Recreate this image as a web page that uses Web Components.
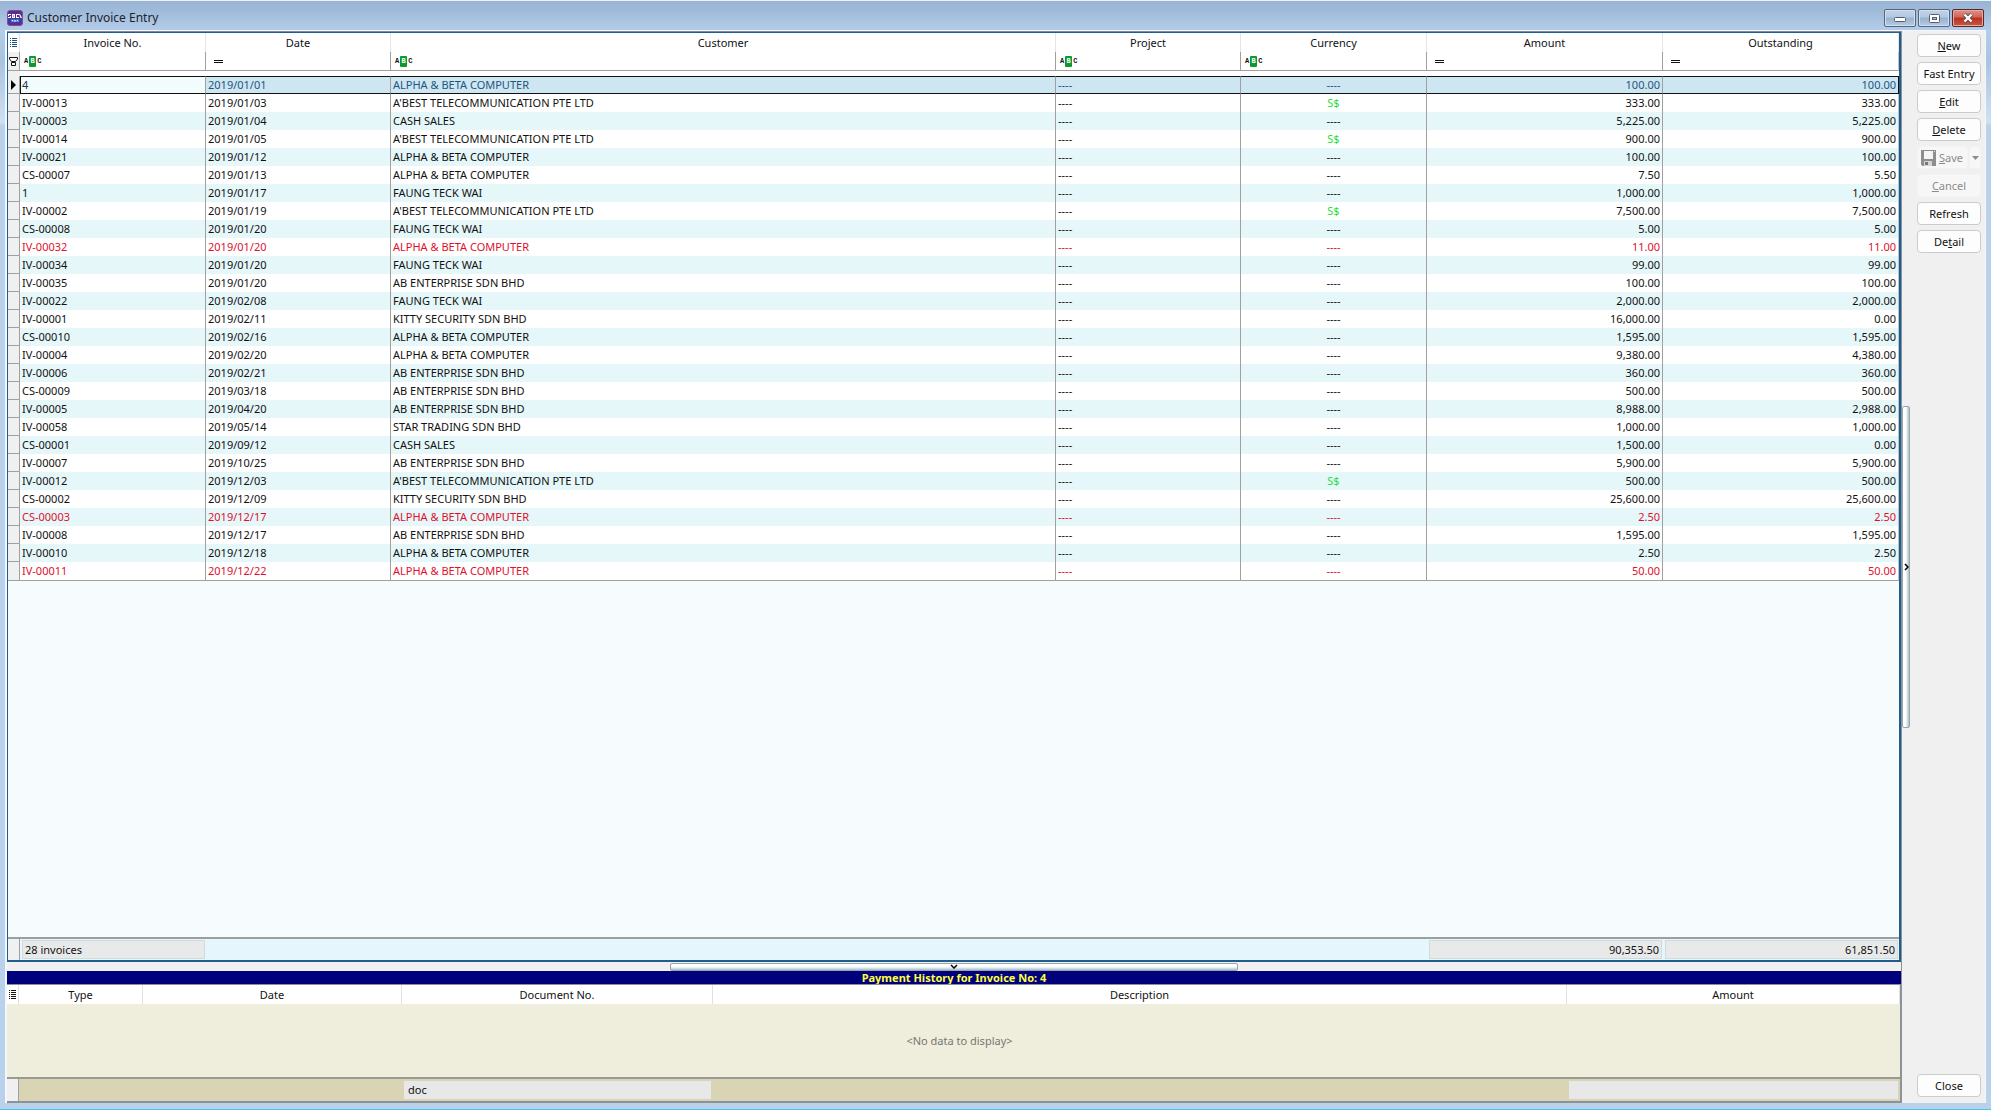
<!DOCTYPE html>
<html lang="en">
<head>
<meta charset="utf-8">
<title>Customer Invoice Entry</title>
<style>
  html, body { margin: 0; height: 100%; }
  body { font: 11px/16px "Noto Sans", "Open Sans", sans-serif; color: #111; background: #b9d1ea; }
</style>
</head>
<body>
<app-window>
  <title-bar slot="title">Customer Invoice Entry</title-bar>
  <invoice-grid slot="main"></invoice-grid>
  <split-handle slot="main" direction="down"></split-handle>
  <payment-history slot="main" invoice="4"></payment-history>
  <split-handle slot="divider" direction="right"></split-handle>
  <side-actions slot="side">
    <action-button><u>N</u>ew</action-button>
    <action-button>Fast Entry</action-button>
    <action-button><u>E</u>dit</action-button>
    <action-button><u>D</u>elete</action-button>
    <save-button></save-button>
    <action-button disabled><u>C</u>ancel</action-button>
    <action-button>Refresh</action-button>
    <action-button>De<u>t</u>ail</action-button>
    <action-button slot="bottom">Close</action-button>
  </side-actions>
</app-window>

<script>
class BaseElement extends HTMLElement {
  connectedCallback() {
    if (this.shadowRoot) return;
    this.attachShadow({ mode: 'open' }).innerHTML = this.render();
  }
}

const define = (name, render) =>
  customElements.define(name, class extends BaseElement {
    render() { return render(this); }
  });

define('app-window', () => `
  <style>
    :host { display: flex; flex-direction: column; height: 100vh; box-sizing: border-box;
      border-top: 1px solid #eef3f8; border-bottom: 1px solid #4fc0e4;
      background: linear-gradient(#9ab4d4, #b4cce8 30px, #a9c3e0 60px, #cfe0f3 121px, #b9d1ea 125px); }
    .client { flex: 1; display: flex; min-height: 0; margin: 0 5px 6px; border: 1px solid #f4f7fb;
      border-left-width: 2px; border-bottom: 0; background: #f0f0f0; }
    main { flex: 1; min-width: 0; display: flex; flex-direction: column; border-right: 1px solid #8d9399;
      border-top: 1px solid #7f8b98; }
    .divider { display: flex; width: 8px; }
    aside { display: flex; width: 75px; }
  </style>
  <slot name="title"></slot>
  <div class="client">
    <main><slot name="main"></slot></main>
    <div class="divider"><slot name="divider"></slot></div>
    <aside><slot name="side"></slot></aside>
  </div>`);

define('title-bar', () => `
  <style>
    :host { display: flex; align-items: center; height: 29px; padding: 0 7px; gap: 4px;
      box-sizing: border-box; font-size: 12px; color: #1a2433; background: linear-gradient(#98b3d4, #a4bfdc 50%, #b4cce9); }
    h1 { margin: 0; font: inherit; flex: 1; padding-top: 5px; }
    .logo { display: block; margin-top: 5px; }
    .controls { display: flex; gap: 2px; padding-top: 5px; }
    button { width: 32px; height: 18px; padding: 0; box-sizing: border-box; border: 1px solid #54657c;
      border-radius: 2px; box-shadow: inset 0 0 0 1px #d3e0ef; display: grid; place-items: center;
      background: linear-gradient(#c0d2e6, #b3c8e0 45%, #98b1cd 50%, #b4cbe5); }
    button.close { border-color: #5a2630; box-shadow: inset 0 0 0 1px #e5a79f;
      background: linear-gradient(#dc9388, #cf6354 45%, #b9311f 50%, #cb5645); }
    svg { display: block; }
  </style>
  <svg class="logo" width="16" height="16" viewBox="0 0 16 16" aria-hidden="true">
    <rect x="0.5" y="0.5" width="15" height="15" rx="2.5" fill="#5e2c8c" stroke="#7a4ca4"/>
    <rect x="1" y="8" width="14" height="4" fill="#3c3fa0"/>
    <path d="M1 4h3v1H2v1h2v2H1V7h2V6H1zM5 4h3v4H5zM9 4h3v1h-2v2h2v1H9zM12 4h1l2 4h-1.500z" fill="#fff"/>
    <path d="M6 5.500h1v1H6z" fill="#5e2c8c"/>
    <path d="M4 9.500h8v2.500H4z" fill="#4b8fe0"/><path d="M5 10.500h1M7 11h2M10 10.500h1" stroke="#cfe6ff"/>
  </svg>
  <h1><slot></slot></h1>
  <div class="controls">
    <button aria-label="Minimize"><svg width="12" height="7"><rect x="0.5" y="2.500" width="11" height="4" rx="1" fill="#fff" stroke="#555f6d"/></svg></button>
    <button aria-label="Restore"><svg width="11" height="9"><rect x="0.5" y="0.5" width="10" height="8" rx="1" fill="#fff" stroke="#555f6d"/><rect x="3.500" y="3.500" width="4" height="2" fill="#a9bfd8" stroke="#555f6d"/></svg></button>
    <button class="close" aria-label="Close window"><svg width="12" height="10" viewBox="0 0 12 10"><path d="M2.500 1.500l7 7M9.500 1.500l-7 7" stroke="#5d4a55" stroke-width="4"/><path d="M2.500 1.500l7 7M9.500 1.500l-7 7" stroke="#fff" stroke-width="2.400"/></svg></button>
  </div>`);

/* Small operator button shown in the filter row: contains (ABC) or equals. */
define('filter-operator', el => `
  <style>
    :host { display: flex; height: 18px; align-items: center; }
    button { display: flex; align-items: center; gap: 1px; height: 11px; padding: 0; border: 0; background: none;
      font: bold 7px/11px "Liberation Mono", monospace; color: #111; }
    b { background: #0d9a2c; color: #fff; width: 7px; border-radius: 1px; text-align: center; }
    svg { display: block; margin-left: 4px; }
  </style>
  ${el.getAttribute('kind') === 'abc'
    ? '<button aria-label="Contains">A<b>B</b>C</button>'
    : '<button aria-label="Equals"><svg width="9" height="3"><path d="M0 .5h9M0 2.500h9" stroke="#111"/></svg></button>'}`);

define('split-handle', el => {
  const down = el.getAttribute('direction') === 'down';
  const arrow = down
    ? '<svg width="8" height="5"><path d="M1 1l3 3 3-3" fill="none" stroke="#000" stroke-width="1.500"/></svg>'
    : '<svg width="5" height="8"><path d="M1 1l3 3-3 3" fill="none" stroke="#000" stroke-width="1.500"/></svg>';
  return `
  <style>
    :host { display: flex; justify-content: center; align-items: center; ${down ? 'height: 9px' : 'width: 8px'}; }
    button { display: grid; place-items: center; padding: 0; box-sizing: border-box;
      border: 1px solid #9aa5ab; border-radius: 2px;
      ${down ? 'width: 30%; height: 8px; background: linear-gradient(#fff 45%, #a9c0cc)'
             : 'height: 30%; width: 8px; background: linear-gradient(90deg, #fff 45%, #a9c0cc)'}; }
    svg { display: block; }
  </style>
  <button aria-label="Toggle panel">${arrow}</button>`;
});

const LIST_ICON = `<svg width="7" height="9" viewBox="0 0 7 9" aria-hidden="true">
  <path d="M0 .5h1M0 2.500h1M0 4.500h1M0 6.500h1M0 8.500h1M2 .5h5M2 2.500h5M2 4.500h5M2 6.500h5M2 8.500h5" stroke="currentColor"/></svg>`;

const INVOICES = `4|2019/01/01|ALPHA & BETA COMPUTER||100.00|100.00
IV-00013|2019/01/03|A'BEST TELECOMMUNICATION PTE LTD|S$|333.00|333.00
IV-00003|2019/01/04|CASH SALES||5,225.00|5,225.00
IV-00014|2019/01/05|A'BEST TELECOMMUNICATION PTE LTD|S$|900.00|900.00
IV-00021|2019/01/12|ALPHA & BETA COMPUTER||100.00|100.00
CS-00007|2019/01/13|ALPHA & BETA COMPUTER||7.50|5.50
1|2019/01/17|FAUNG TECK WAI||1,000.00|1,000.00
IV-00002|2019/01/19|A'BEST TELECOMMUNICATION PTE LTD|S$|7,500.00|7,500.00
CS-00008|2019/01/20|FAUNG TECK WAI||5.00|5.00
IV-00032|2019/01/20|ALPHA & BETA COMPUTER||11.00|11.00|due
IV-00034|2019/01/20|FAUNG TECK WAI||99.00|99.00
IV-00035|2019/01/20|AB ENTERPRISE SDN BHD||100.00|100.00
IV-00022|2019/02/08|FAUNG TECK WAI||2,000.00|2,000.00
IV-00001|2019/02/11|KITTY SECURITY SDN BHD||16,000.00|0.00
CS-00010|2019/02/16|ALPHA & BETA COMPUTER||1,595.00|1,595.00
IV-00004|2019/02/20|ALPHA & BETA COMPUTER||9,380.00|4,380.00
IV-00006|2019/02/21|AB ENTERPRISE SDN BHD||360.00|360.00
CS-00009|2019/03/18|AB ENTERPRISE SDN BHD||500.00|500.00
IV-00005|2019/04/20|AB ENTERPRISE SDN BHD||8,988.00|2,988.00
IV-00058|2019/05/14|STAR TRADING SDN BHD||1,000.00|1,000.00
CS-00001|2019/09/12|CASH SALES||1,500.00|0.00
IV-00007|2019/10/25|AB ENTERPRISE SDN BHD||5,900.00|5,900.00
IV-00012|2019/12/03|A'BEST TELECOMMUNICATION PTE LTD|S$|500.00|500.00
CS-00002|2019/12/09|KITTY SECURITY SDN BHD||25,600.00|25,600.00
CS-00003|2019/12/17|ALPHA & BETA COMPUTER||2.50|2.50|due
IV-00008|2019/12/17|AB ENTERPRISE SDN BHD||1,595.00|1,595.00
IV-00010|2019/12/18|ALPHA & BETA COMPUTER||2.50|2.50
IV-00011|2019/12/22|ALPHA & BETA COMPUTER||50.00|50.00|due`
  .split('\n').map(line => line.replace('&', '&amp;').split('|'));

const INVOICE_COLS = '<colgroup><col style="width:12px"><col style="width:186px"><col style="width:185px"><col><col style="width:185px"><col style="width:186px"><col style="width:236px"><col style="width:236px"></colgroup>';

define('invoice-grid', () => `
  <style>
    :host { flex: 1; min-height: 0; display: flex; flex-direction: column; border: 2px solid #1f5d8c;
      border-top-width: 1px; border-left-width: 1px; background: #f6fcfe; }
    .scroll { flex: 1; min-height: 0; overflow: hidden; }
    table { width: 100%; table-layout: fixed; border-collapse: separate; border-spacing: 0; }
    th, td { box-sizing: border-box; padding: 0 2px; font-weight: normal; white-space: nowrap; overflow: hidden; text-align: left; }
    thead th { height: 19px; background: #fff; text-align: center; border-right: 1px solid #e2e6e8; }
    thead td { height: 19px; background: #fff; padding: 0 4px; border-right: 1px solid #a0a0a0; border-bottom: 1px solid #a0a0a0; }
    thead td:not(:first-child):last-child, .rows td:last-child { border-right-color: #b9c6ce; }
    thead .gap td { height: 5px; border: 0; padding: 0; }
    thead svg, .mark svg { display: block; margin: 0 auto; }
    thead th:first-child { color: #1c4f73; padding: 0; }
    thead td:first-child { background: #f0f0f0; padding: 0; }
    .rows td { height: 18px; line-height: 18px; border-right: 1px solid #a0a0a0; background: #fff; }
    .rows tr:nth-child(odd) td { background: #e6f7fa; }
    .rows tr td.mark { background: #f0f0f0; padding: 0; border-bottom: 1px solid #a0a0a0; }
    .rows tr:last-child td { border-bottom: 1px solid #a0a0a0; height: 19px; }
    .rows td:nth-child(6) { text-align: center; }
    .rows td:nth-child(n+7) { text-align: right; }
    tr.due { color: #e0102c; }
    td.foreign { color: #1fe03a; }
    .rows tr.current td:not(.mark) { background: #cde6f2; color: #1f567c;
      border-top: 1px solid #111; border-bottom: 1px solid #111; line-height: 16px; }
    .rows tr.current td:nth-child(2) { background: #f2fcfc; color: #24333f; box-shadow: inset 1px 0 #111; }
    .rows tr.current td:last-child { border-right-color: #111; }
    .summary { border-top: 2px solid #9a9fa2; background: #e5f7fc; }
    .summary td { height: 21px; padding: 1px 1px 1px 2px; }
    .summary td:first-child { background: #f0f0f0; border-right: 1px solid #a0a0a0; }
    .summary span { display: block; height: 19px; line-height: 17px; padding: 0 2px; background: #e8eaea;
      border: 1px solid #d2dadc; box-sizing: border-box; }
    .summary .num { text-align: right; }
  </style>
  <div class="scroll">
    <table aria-label="Customer invoices">
      ${INVOICE_COLS}
      <thead>
        <tr><th>${LIST_ICON}</th>${['Invoice No.', 'Date', 'Customer', 'Project', 'Currency', 'Amount', 'Outstanding'].map(t => `<th>${t}</th>`).join('')}</tr>
        <tr><td><svg width="9" height="9" viewBox="0 0 9 9" aria-hidden="true"><path d="M.5.5h8v1.500l-2 2.500h-4l-2-2.500zM2.500 5.500h4v3h-4z" fill="#fff" stroke="#111"/></svg></td>
        ${['abc', 'eq', 'abc', 'abc', 'abc', 'eq', 'eq'].map(k => `<td><filter-operator kind="${k}"></filter-operator></td>`).join('')}</tr>
        <tr class="gap"><td></td><td colspan="7"></td></tr>
      </thead>
      <tbody class="rows">${INVOICES.map(([no, date, customer, cur, amount, out, due], i) => `
        <tr class="${due || ''}${i ? '' : 'current'}"><td class="mark">${i ? '' : '<svg width="5" height="10" viewBox="0 0 5 10"><path d="M0 0l5 5-5 5z"/></svg>'}</td>
        <td>${no}</td><td>${date}</td><td>${customer}</td><td>----</td>
        <td class="${cur ? 'foreign' : ''}">${cur || '----'}</td><td>${amount}</td><td>${out}</td></tr>`).join('')}
      </tbody>
    </table>
  </div>
  <table class="summary" aria-label="Totals">
    ${INVOICE_COLS}
    <tr><td></td><td><span>28 invoices</span></td><td></td><td></td><td></td><td></td>
    <td class="num"><span>90,353.50</span></td><td class="num"><span>61,851.50</span></td></tr>
  </table>`);

const HISTORY_COLS = '<colgroup><col style="width:12px"><col style="width:124px"><col style="width:259px"><col style="width:311px"><col><col style="width:333px"></colgroup>';

define('payment-history', el => `
  <style>
    :host { display: flex; flex-direction: column; height: 132px; }
    h2 { margin: 0; height: 13px; font: bold 11px/13px "Noto Sans", sans-serif; color: #ffff3c; text-align: center; background: #00007c; }
    .grid { flex: 1; display: flex; flex-direction: column; background: #efeedd; border: 1px solid #8b9196; border-left: 0; border-bottom-width: 2px; }
    table { width: 100%; table-layout: fixed; border-collapse: separate; border-spacing: 0; }
    th, td { box-sizing: border-box; padding: 0; font-weight: normal; white-space: nowrap; }
    th { height: 19px; background: #fff; border-right: 1px solid #e0e0e0; text-align: center; }
    th svg { display: block; margin: 0 auto; }
    .empty { flex: 1; display: grid; place-items: center; margin: 0; padding-left: 12px; color: #77776f; }
    .summary { border-top: 2px solid #9a9a94; background: #d8d4b4; }
    .summary td { height: 22px; }
    .summary td:first-child { background: #f0f0f0; border-right: 1px solid #a0a0a0; }
    .summary span { display: block; height: 18px; line-height: 18px; margin: 0 2px; padding: 0 4px; background: #e8e8e8; }
  </style>
  <h2>Payment History for Invoice No: ${el.getAttribute('invoice')}</h2>
  <div class="grid">
    <table aria-label="Payment history">
      ${HISTORY_COLS}
      <thead><tr><th>${LIST_ICON}</th><th>Type</th><th>Date</th><th>Document No.</th><th>Description</th><th>Amount</th></tr></thead>
    </table>
    <p class="empty">&lt;No data to display&gt;</p>
    <table class="summary" aria-label="Payment totals">
      ${HISTORY_COLS}
      <tr><td></td><td></td><td></td><td><span>doc</span></td><td></td><td><span>&nbsp;</span></td></tr>
    </table>
  </div>`);

define('side-actions', () => `
  <style>
    :host { flex: 1; display: flex; flex-direction: column; justify-content: space-between; padding: 3px 4px 6px 7px; }
    div { display: flex; flex-direction: column; gap: 5px; }
  </style>
  <div><slot></slot></div>
  <div><slot name="bottom"></slot></div>`);

const BUTTON_CSS = `
  button { box-sizing: border-box; height: 23px; padding: 0; font: inherit; line-height: 21px; color: #111;
    background: #fdfdfd; border: 1px solid #c9cccb; border-radius: 4px; white-space: nowrap; }
  button:disabled { color: #8c8c8c; background: #f7f7f7; border-color: #f3f3f3; }`;

define('action-button', el => `
  <style>
    :host { display: flex; }
    ${BUTTON_CSS}
    button { flex: 1; }
  </style>
  <button ${el.hasAttribute('disabled') ? 'disabled' : ''}><slot></slot></button>`);

define('save-button', () => `
  <style>
    :host { display: flex; gap: 1px; }
    ${BUTTON_CSS}
    .save { flex: 1; display: flex; align-items: center; gap: 3px; padding-left: 3px; }
    .more { width: 12px; display: grid; place-items: center; }
    svg { display: block; }
  </style>
  <button class="save" disabled>
    <svg width="15" height="16" viewBox="0 0 15 16" aria-hidden="true">
      <path d="M0 0h15v16H1.500L0 14.500z" fill="#8e8e8e"/><path d="M3 1h9v8H3z" fill="#f4f4f4"/>
      <path d="M13 1h1v1h-1z" fill="#ddd"/><path d="M3 11h8v5H3z" fill="#d4d4d4"/><path d="M4 12h3v3H4z" fill="#777"/>
    </svg><span><u>S</u>ave</span>
  </button>
  <button class="more" disabled aria-label="Save options"><svg width="7" height="4"><path d="M0 0h7L3.500 4z" fill="#8c8c8c"/></svg></button>`);
</script>
</body>
</html>
